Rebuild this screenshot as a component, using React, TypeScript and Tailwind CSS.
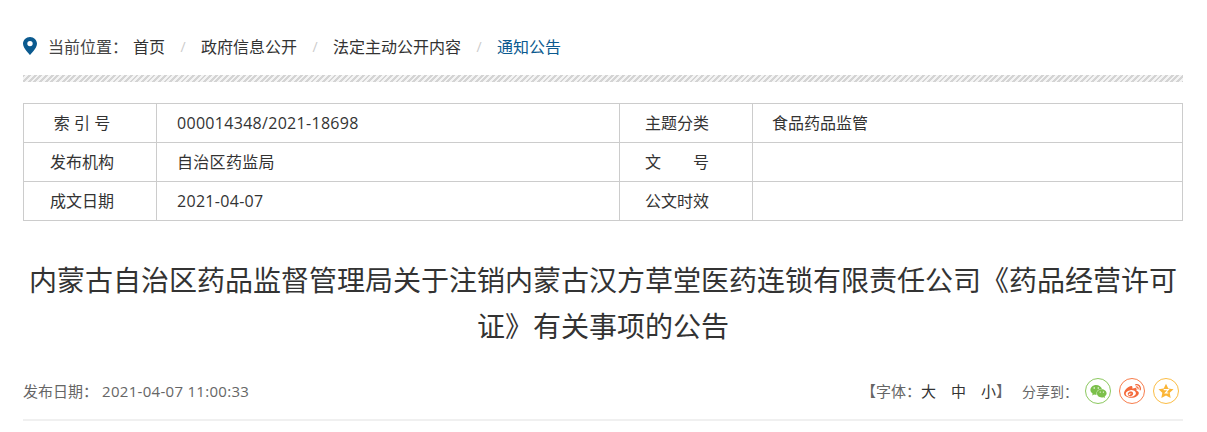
import { FaWeibo, FaWeixin } from "react-icons/fa";

const crumbs = ["首页", "政府信息公开", "法定主动公开内容"];

const rows = [
  ["索 引 号", "000014348/2021-18698", "主题分类", "食品药品监管"],
  ["发布机构", "自治区药监局", "文　　号", ""],
  ["成文日期", "2021-04-07", "公文时效", ""],
];

export default function App() {
  return (
    <div className="min-h-[432px] bg-white pl-[23px] pr-[24px] font-['Open_Sans','Noto_Sans_CJK_SC',sans-serif] text-[#333]">
      {/* Breadcrumb */}
      <div className="flex h-[75px] items-center pt-[19px] text-[16px] leading-[24px]">
        <svg width="14" height="18" viewBox="0 0 14 18" className="mr-[11px] mb-[2px]">
          <path
            fillRule="evenodd"
            d="M7 0C3.1 0 0 3 0 6.8 0 11.4 7 18 7 18s7-6.600 7-11.200C14 3 10.900 0 7 0Zm0 9.300a2.700 2.700 0 1 1 0-5.400 2.700 2.700 0 0 1 0 5.400Z"
            fill="#0b5a8f"
          />
        </svg>
        <span className="w-[85px] text-[#444]">当前位置：</span>
        {crumbs.map((c) => (
          <span key={c} className="flex items-center">
            <span>{c}</span>
            <span className="w-[36px] text-center text-[14px] text-[#ccc]">/</span>
          </span>
        ))}
        <span className="text-[#0b5a8f]">通知公告</span>
      </div>

      <div className="h-[7px] bg-[repeating-linear-gradient(135deg,#d4d4d4_0,#d4d4d4_2px,#f4f4f4_2px,#f4f4f4_4px)]" />

      {/* Info table */}
      <table className="mt-[21px] w-full table-fixed border-collapse text-[16px] leading-[24px]">
        <colgroup>
          <col className="w-[133px]" />
          <col className="w-[463px]" />
          <col className="w-[133px]" />
          <col />
        </colgroup>
        <tbody>
          {rows.map((r) => (
            <tr key={r[0]} className="h-[39px]">
              <td className="border border-[#ccc] pr-[16px] text-center">{r[0]}</td>
              <td className="border border-[#ccc] pl-[20px] tracking-[0.3px]">{r[1]}</td>
              <td className="border border-[#ccc] pr-[18px] text-center">{r[2]}</td>
              <td className="border border-[#ccc] pl-[19px]">{r[3]}</td>
            </tr>
          ))}
        </tbody>
      </table>

      {/* Title */}
      <h1 className="mt-[36px] text-center text-[28px] leading-[46px] font-normal text-[#333]">
        内蒙古自治区药品监督管理局关于注销内蒙古汉方草堂医药连锁有限责任公司《药品经营许可证》有关事项的公告
      </h1>

      {/* Meta row */}
      <div className="mt-[22px] flex h-[50px] items-center justify-between border-b-2 border-[#f0f0f0] pb-[8px] text-[15px] text-[#666]">
        <div>
          <span>发布日期：</span>
          <span className="ml-[4px] tracking-[0.3px]">2021-04-07 11:00:33</span>
        </div>
        <div className="mr-[4px] flex items-center">
          <span>【字体：</span>
          <span className="text-[#333]">大</span>
          <span className="ml-[15px] text-[#333]">中</span>
          <span className="ml-[15px] text-[#333]">小</span>
          <span>】</span>
          <span className="ml-[11px] mr-[7px] text-[14px]">分享到：</span>
          <div className="flex gap-[8px]">
            <div className="flex h-[26px] w-[26px] items-center justify-center rounded-full border border-[#8cc85f] text-[#7cc04b]">
              <FaWeixin size={17} />
            </div>
            <div className="flex h-[26px] w-[26px] items-center justify-center rounded-full border border-[#f77d4c] text-[#f4693a]">
              <FaWeibo size={17} />
            </div>
            <div className="flex h-[26px] w-[26px] items-center justify-center rounded-full border border-[#fbbd45]">
              <svg width="16" height="16" viewBox="0 0 24 24">
                <path
                  d="M12 1l3.400 7.300 7.900 1-5.800 5.400 1.500 7.900L12 18.700l-7 3.900 1.500-7.900L.7 9.300l7.900-1z"
                  fill="#fbb535"
                />
                <path d="M8.500 10h7l-4.500 5h4.500" fill="none" stroke="#fff" strokeWidth="1.700" />
              </svg>
            </div>
          </div>
        </div>
      </div>
    </div>
  );
}
